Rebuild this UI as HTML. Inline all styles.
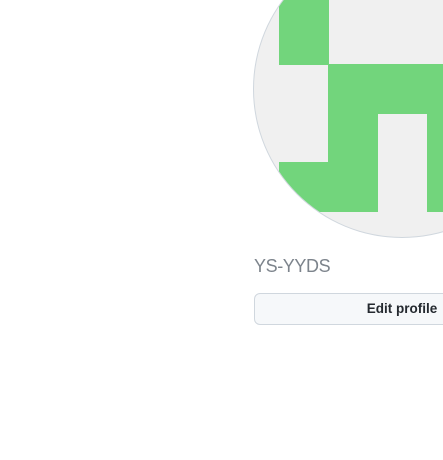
<html><head><style>
body{margin:0;width:443px;height:460px;overflow:hidden;background:#fff;position:relative;font-family:"Liberation Sans",sans-serif}
.av{position:absolute;left:254px;top:-59px;width:296px;height:296px;border-radius:50%;overflow:hidden;background:#f0f0f0;box-shadow:0 0 0 1px #d0d7de}
.g{position:absolute;background:#72d57c}
.name{position:absolute;left:254px;top:256px;font-size:18px;font-weight:300;color:#7d848c;letter-spacing:-0.4px}
.btn{position:absolute;left:254px;top:293px;width:294px;height:30px;border:1px solid #d0d7de;border-radius:6px;background:#f6f8fa;text-align:center;line-height:30px;font-size:13.5px;font-weight:bold;color:#24292f}
</style></head><body>
<div class="av">
<div class="g" style="left:25px;top:0;width:50px;height:124px"></div>
<div class="g" style="left:74px;top:123px;width:230px;height:50px"></div>
<div class="g" style="left:74px;top:123px;width:50px;height:148px"></div>
<div class="g" style="left:25px;top:221px;width:99px;height:50px"></div>
<div class="g" style="left:173px;top:123px;width:50px;height:148px"></div>
</div>
<div class="name">YS-YYDS</div>
<div class="btn">Edit profile</div>
</body></html>
